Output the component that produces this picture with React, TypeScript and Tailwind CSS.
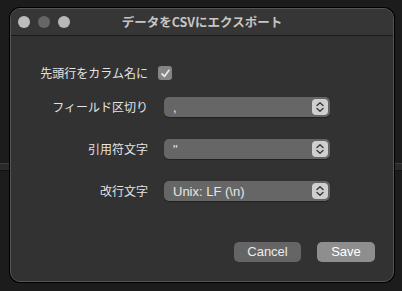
import React from "react";

const jp = { fontFamily: '"Noto Sans CJK JP", "Noto Sans", sans-serif' };
const latin = { fontFamily: '"Liberation Sans", Arial, sans-serif' };

function Stepper() {
  return (
    <div className="w-[16px] h-[16px] rounded-[4px] bg-[#cfcfcf] flex items-center justify-center">
      <svg width="10" height="12" viewBox="0 0 10 12" fill="none">
        <path d="M2 4.5 L5 1.8 L8 4.5" stroke="#3a3a3a" strokeWidth="1.4" strokeLinecap="round" strokeLinejoin="round" />
        <path d="M2 7.5 L5 10.2 L8 7.5" stroke="#3a3a3a" strokeWidth="1.4" strokeLinecap="round" strokeLinejoin="round" />
      </svg>
    </div>
  );
}

function Popup({ value }: { value: string }) {
  return (
    <div className="w-[166px] h-[20px] rounded-[5px] bg-[#666666] flex items-center justify-between pl-[9px] pr-[2px] shadow-[0_1px_1px_rgba(0,0,0,0.35)]">
      <span className="text-[13px] text-[#e6e6e6] leading-none" style={latin}>{value}</span>
      <Stepper />
    </div>
  );
}

export default function App() {
  return (
    <div className="w-[402px] h-[291px] bg-[#1c1c1c] relative overflow-hidden pt-[8px] pl-[10px]">
      <div className="absolute left-0 top-[163px] w-[10px] h-[8px] bg-[#2a2a2a] border-t border-[#3c3c3c] border-b border-b-[#111]" />
      <div className="absolute right-0 top-[163px] w-[7px] h-[8px] bg-[#2a2a2a] border-t border-[#3c3c3c] border-b border-b-[#111]" />
      <div className="relative w-[384px] h-[274px] rounded-[10px] bg-[#323232] border border-[#555555] shadow-[0_0_0_1px_#000] overflow-hidden flex flex-col">
        <div className="h-[27px] bg-[#363636] border-b border-[#1a1a1a] relative flex items-center">
          <div className="flex items-center gap-[8px] pl-[7px]">
            <div className="w-[12px] h-[12px] rounded-full bg-[#bdbdbd]" />
            <div className="w-[12px] h-[12px] rounded-full bg-[#666666]" />
            <div className="w-[12px] h-[12px] rounded-full bg-[#b8b8b8]" />
          </div>
          <div className="absolute inset-0 flex items-center justify-center">
            <span className="text-[12.5px] font-bold text-[#c6c6c6]" style={jp}>データをCSVにエクスポート</span>
          </div>
        </div>
        <div className="flex-1 flex flex-col pt-[30px]">
          <div className="flex items-center h-[14px]">
            <div className="w-[137px] text-right text-[12px] text-[#e4e4e4]" style={jp}>先頭行をカラム名に</div>
            <div className="ml-[10px] w-[14px] h-[14px] rounded-[3px] bg-[#858585] flex items-center justify-center">
              <svg width="11" height="11" viewBox="0 0 11 11" fill="none">
                <path d="M2 5.8 L4.4 8.4 L9 2.2" stroke="#e8e8e8" strokeWidth="1.7" strokeLinecap="round" strokeLinejoin="round" />
              </svg>
            </div>
          </div>
          <div className="flex items-center h-[20px] mt-[17px]">
            <div className="w-[137px] text-right text-[12px] text-[#e4e4e4]" style={jp}>フィールド区切り</div>
            <div className="ml-[16px]"><Popup value="," /></div>
          </div>
          <div className="flex items-center h-[20px] mt-[22px]">
            <div className="w-[137px] text-right text-[12px] text-[#e4e4e4]" style={jp}>引用符文字</div>
            <div className="ml-[16px]"><Popup value={'"'} /></div>
          </div>
          <div className="flex items-center h-[20px] mt-[22px]">
            <div className="w-[137px] text-right text-[12px] text-[#e4e4e4]" style={jp}>改行文字</div>
            <div className="ml-[16px]"><Popup value={"Unix: LF (\\n)"} /></div>
          </div>
          <div className="flex justify-end gap-[16px] mt-[41px] pr-[18px]">
            <div className="w-[67px] h-[20px] rounded-[5px] bg-[#656565] flex items-center justify-center text-[13px] text-[#ececec]" style={latin}>Cancel</div>
            <div className="w-[58px] h-[20px] rounded-[5px] bg-[#8e8e8e] flex items-center justify-center text-[13px] text-white" style={latin}>Save</div>
          </div>
        </div>
      </div>
    </div>
  );
}
